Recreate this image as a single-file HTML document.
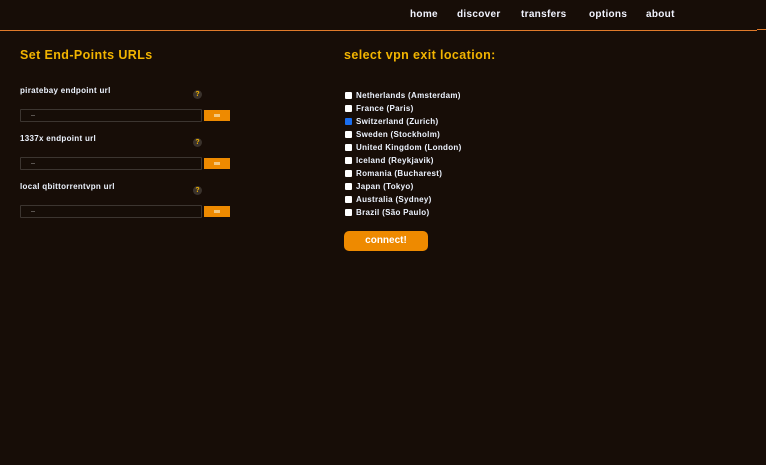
<!DOCTYPE html>
<html><head><meta charset="utf-8"><style>
*{margin:0;padding:0;box-sizing:border-box}
body{width:766px;height:465px;background:#170d07;font-family:"Liberation Sans",sans-serif;position:relative;overflow:hidden;color:#e8f0ff}
.nav{position:absolute;top:0;left:0;width:757px;height:31px;border-bottom:1px solid #e07a2a}
.nav span{position:absolute;top:9px;font-size:10px;font-weight:bold;color:#f2f4ff;letter-spacing:.3px}
.stub{position:absolute;left:757px;top:29px;width:9px;height:1px;background:#e07a2a}
h2{position:absolute;font-size:12.5px;font-weight:bold;color:#f2b400;letter-spacing:.4px}
.lbl{position:absolute;left:20px;font-size:8px;font-weight:bold;color:#eef4ff;letter-spacing:.3px}
.q{position:absolute;left:193px;width:9px;height:9px;border-radius:50%;background:#3a322c;color:#f2b400;font-size:7px;font-weight:bold;text-align:center;line-height:9px}
.inp{position:absolute;left:20px;width:182px;height:13px;border:1px solid #3c3530;border-radius:1px;background:#160d07}
.inp i{position:absolute;left:10px;top:3px;width:4px;height:3px;border-bottom:1px solid #5a5450}
.btn{position:absolute;left:204px;width:26px;height:11px;background:#ee8a00}
.btn i{position:absolute;left:10px;top:4px;width:6px;height:3px;background:#f4c880}
.row{position:absolute;left:345px;font-size:8px;font-weight:bold;color:#eef4ff;letter-spacing:.3px;height:10px;line-height:8px}
.row b{position:absolute;left:0;top:0;width:7px;height:7px;background:#fff;border-radius:1px}
.row b.c{background:#1a6ef0}
.row span{position:absolute;left:11px;top:0;white-space:nowrap}
.con{position:absolute;left:344px;top:231px;width:84px;height:20px;background:#ee8a00;border-radius:5px;color:#fff;font-size:10px;font-weight:bold;text-align:center;line-height:20px}
</style></head><body>
<div class="nav">
<span style="left:410px">home</span><span style="left:457px">discover</span><span style="left:521px">transfers</span><span style="left:589px">options</span><span style="left:646px">about</span>
</div><div class="stub"></div>
<h2 style="left:20px;top:48px">Set End-Points URLs</h2>
<h2 style="left:344px;top:48px">select vpn exit location:</h2>

<div class="lbl" style="top:86px">piratebay endpoint url</div><div class="q" style="top:90px">?</div>
<div class="inp" style="top:109px"><i></i></div><div class="btn" style="top:110px"><i></i></div>
<div class="lbl" style="top:134px">1337x endpoint url</div><div class="q" style="top:138px">?</div>
<div class="inp" style="top:157px"><i></i></div><div class="btn" style="top:158px"><i></i></div>
<div class="lbl" style="top:182px">local qbittorrentvpn url</div><div class="q" style="top:186px">?</div>
<div class="inp" style="top:205px"><i></i></div><div class="btn" style="top:206px"><i></i></div>

<div class="row" style="top:92px"><b></b><span>Netherlands (Amsterdam)</span></div>
<div class="row" style="top:105px"><b></b><span>France (Paris)</span></div>
<div class="row" style="top:118px"><b class="c"></b><span>Switzerland (Zurich)</span></div>
<div class="row" style="top:131px"><b></b><span>Sweden (Stockholm)</span></div>
<div class="row" style="top:144px"><b></b><span>United Kingdom (London)</span></div>
<div class="row" style="top:157px"><b></b><span>Iceland (Reykjavik)</span></div>
<div class="row" style="top:170px"><b></b><span>Romania (Bucharest)</span></div>
<div class="row" style="top:183px"><b></b><span>Japan (Tokyo)</span></div>
<div class="row" style="top:196px"><b></b><span>Australia (Sydney)</span></div>
<div class="row" style="top:209px"><b></b><span>Brazil (São Paulo)</span></div>
<div class="con">connect!</div>
</body></html>
